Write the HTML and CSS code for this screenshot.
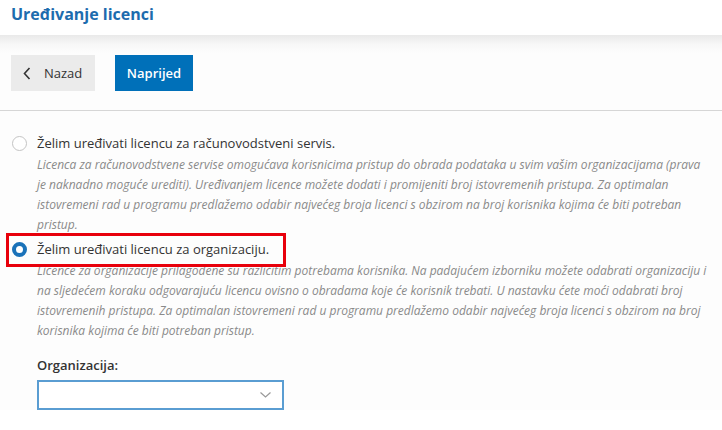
FILE: index.html
```html
<!DOCTYPE html>
<html lang="hr">
<head>
<meta charset="utf-8">
<title>Uređivanje licenci</title>
<link rel="stylesheet" href="styles.css">
</head>
<body>
<header class="page-header">
  <h1 class="page-title">Uređivanje licenci</h1>
</header>
<div class="toolbar">
  <button class="btn btn-back" type="button">
    <svg class="btn-icon" width="8" height="13" viewBox="0 0 8 13"><path d="M6.5 1 L1.5 6.5 L6.5 12" fill="none" stroke="#333" stroke-width="1.6"/></svg>
    <span>Nazad</span>
  </button>
  <button class="btn btn-primary" type="button">Naprijed</button>
</div>
<main class="content">
  <div class="option">
    <div class="option-row">
      <span class="radio"></span>
      <span class="option-label">Želim uređivati licencu za računovodstveni servis.</span>
    </div>
    <p class="option-desc">Licenca za računovodstvene servise omogućava korisnicima pristup do obrada podataka u svim vašim organizacijama (prava je naknadno moguće urediti). Uređivanjem licence možete dodati i promijeniti broj istovremenih pristupa. Za optimalan istovremeni rad u programu predlažemo odabir najvećeg broja licenci s obzirom na broj korisnika kojima će biti potreban pristup.</p>
  </div>
  <div class="option">
    <div class="option-row highlighted">
      <span class="radio radio-checked"></span>
      <span class="option-label">Želim uređivati licencu za organizaciju.</span>
    </div>
    <p class="option-desc">Licence za organizacije prilagođene su različitim potrebama korisnika. Na padajućem izborniku možete odabrati organizaciju i na sljedećem koraku odgovarajuću licencu ovisno o obradama koje će korisnik trebati. U nastavku ćete moći odabrati broj istovremenih pristupa. Za optimalan istovremeni rad u programu predlažemo odabir najvećeg broja licenci s obzirom na broj korisnika kojima će biti potreban pristup.</p>
  </div>
  <div class="field">
    <label class="field-label">Organizacija:</label>
    <div class="select">
      <svg class="select-arrow" width="11" height="6" viewBox="0 0 11 6"><path d="M0.5 0.5 L5.5 5 L10.5 0.5" fill="none" stroke="#999" stroke-width="1.2"/></svg>
    </div>
  </div>
</main>
</body>
</html>
```

FILE: styles.css
```css
* { box-sizing: border-box; }
html, body { margin: 0; padding: 0; background: #fff; }
body {
  font-family: "Open Sans", "Noto Sans", sans-serif;
  color: #333;
  width: 722px;
  height: 430px;
  overflow: hidden;
}
.page-header {
  height: 35px;
  padding: 0 11px;
  background: #fff;
}
.page-title {
  margin: 0;
  font-size: 16px;
  font-weight: 700;
  line-height: 28px;
  color: #1d6cae;
}
.toolbar {
  display: flex;
  gap: 20px;
  padding: 20px 11px 19px;
  background: linear-gradient(#e9e9e9 0px, #f7f7f7 9px, #fdfdfd 18px, #fdfdfd 100%);
  border-bottom: 1px solid #d6d6d6;
}
.btn {
  height: 36px;
  border: none;
  font-family: inherit;
  font-size: 13px;
  display: flex;
  align-items: center;
  padding: 0;
  cursor: pointer;
}
.btn-back {
  width: 84px;
  background: #ebebeb;
  color: #333;
  padding-left: 12px;
  gap: 13px;
}
.btn-icon { display: block; }
.btn-primary {
  width: 78px;
  background: #0070b9;
  color: #fff;
  font-weight: 600;
  justify-content: center;
}
.content {
  padding: 22px 13px 0 11px;
  background: #fdfdfd;
}
.option-row {
  display: flex;
  align-items: center;
  gap: 10px;
  height: 20px;
  padding-left: 1px;
  position: relative;
}
.option + .option .option-row { margin-top: 4px; }
.radio {
  width: 15px;
  height: 15px;
  border-radius: 50%;
  border: 1px solid #c4c4c4;
  background: #fff;
  flex: none;
}
.radio-checked {
  border: 4px solid #1a72b9;
  background: #fff;
}
.option-label {
  font-size: 13px;
  line-height: 20px;
  color: #333;
}
.highlighted::after {
  content: "";
  position: absolute;
  left: -5px;
  top: -6px;
  width: 274px;
  height: 28px;
  border: 3px solid #e8000b;
}
.option-desc {
  margin: 2px 0 0;
  padding-left: 26px;
  font-size: 12px;
  font-style: italic;
  line-height: 20px;
  color: #8a8a8a;
}
.field {
  padding-left: 26px;
  margin-top: 14px;
}
.field-label {
  display: block;
  font-size: 13px;
  font-weight: 600;
  line-height: 20px;
  color: #333;
}
.select {
  margin-top: 5px;
  width: 247px;
  height: 30px;
  border: 2px solid #5a9dd2;
  background: #fff;
  display: flex;
  align-items: center;
  justify-content: flex-end;
  padding-right: 11px;
}
.select-arrow { display: block; }
```
